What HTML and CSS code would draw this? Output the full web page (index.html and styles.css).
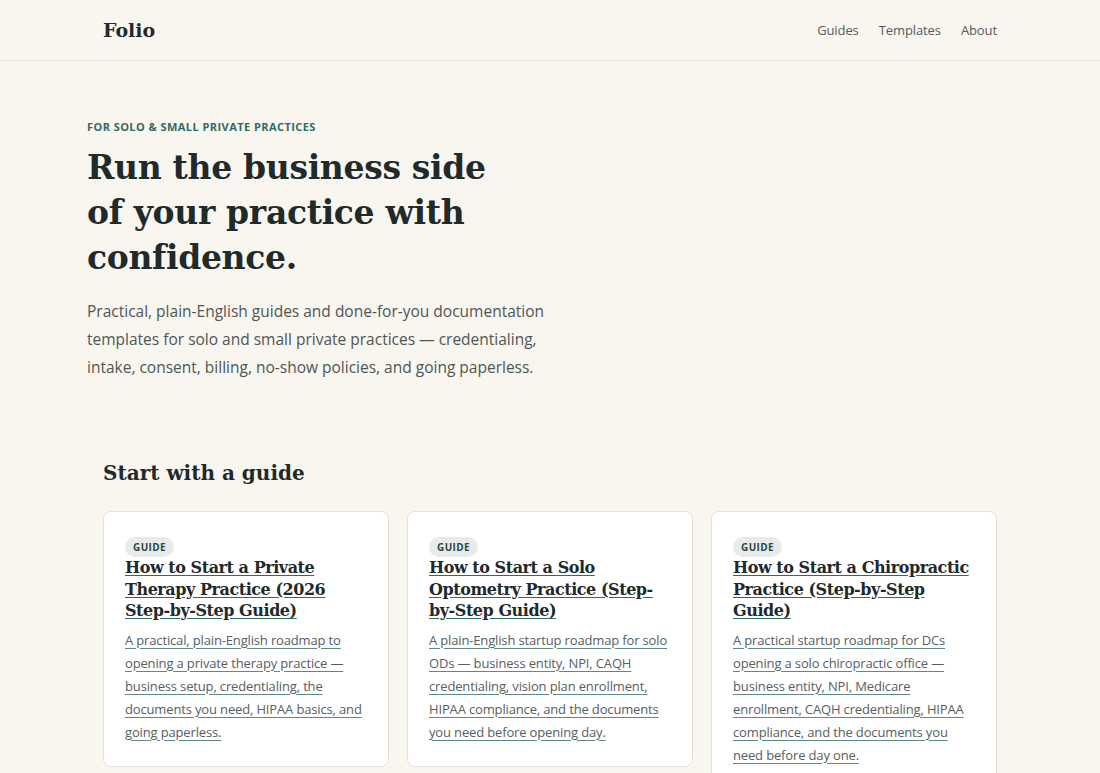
FILE: index.html
```html
<!DOCTYPE html>
<html lang="en">
<head>
    <meta charset="UTF-8">
    <meta name="viewport" content="width=device-width, initial-scale=1.0">
    <title>Folio</title>
    <link rel="stylesheet" href="styles.css">
</head>
<body>
    <header class="site-header">
        <div class="header-inner">
            <a class="logo" href="#">Folio</a>
            <nav class="nav">
                <a href="#">Guides</a>
                <a href="#">Templates</a>
                <a href="#">About</a>
            </nav>
        </div>
    </header>

    <section class="hero">
        <p class="eyebrow">For solo &amp; small private practices</p>
        <h1>Run the business side of your practice with confidence.</h1>
        <p class="lede">Practical, plain-English guides and done-for-you documentation templates for solo and small private practices — credentialing, intake, consent, billing, no-show policies, and going paperless.</p>
    </section>

    <section class="guides">
        <h2>Start with a guide</h2>
        <div class="card-grid">
            <a class="card" href="#">
                <span class="badge">Guide</span>
                <h3>How to Start a Private Therapy Practice (2026 Step-by-Step Guide)</h3>
                <p>A practical, plain-English roadmap to opening a private therapy practice — business setup, credentialing, the documents you need, HIPAA basics, and going paperless.</p>
            </a>
            <a class="card" href="#">
                <span class="badge">Guide</span>
                <h3>How to Start a Solo Optometry Practice (Step-by-Step Guide)</h3>
                <p>A plain-English startup roadmap for solo ODs — business entity, NPI, CAQH credentialing, vision plan enrollment, HIPAA compliance, and the documents you need before opening day.</p>
            </a>
            <a class="card" href="#">
                <span class="badge">Guide</span>
                <h3>How to Start a Chiropractic Practice (Step-by-Step Guide)</h3>
                <p>A practical startup roadmap for DCs opening a solo chiropractic office — business entity, NPI, Medicare enrollment, CAQH credentialing, HIPAA compliance, and the documents you need before day one.</p>
            </a>
        </div>
    </section>
</body>
</html>
```

FILE: styles.css
```css
* {
    box-sizing: border-box;
    margin: 0;
    padding: 0;
}
body {
    font-family: "Open Sans", "Noto Sans", Arial, sans-serif;
    background-color: #f9f5ef;
    color: #1f2a2b;
}
a {
    color: inherit;
    text-decoration: none;
}
.site-header {
    border-bottom: 1px solid #e4ded4;
}
.header-inner {
    max-width: 894px;
    margin: 0 auto;
    height: 60px;
    display: flex;
    justify-content: space-between;
    align-items: center;
}
.logo {
    font-family: "DejaVu Serif", Georgia, serif;
    font-weight: bold;
    font-size: 19px;
    color: #1f2a2b;
}
.nav {
    display: flex;
    gap: 20px;
}
.nav a {
    font-size: 13px;
    letter-spacing: -0.1px;
    color: #555c5b;
}
.hero {
    max-width: 926px;
    margin: 0 auto;
    padding: 58px 0 80px;
}
.eyebrow {
    font-size: 11px;
    font-weight: bold;
    text-transform: uppercase;
    letter-spacing: 0.04em;
    color: #2f6b63;
    margin-bottom: 11px;
}
h1 {
    font-family: "DejaVu Serif", Georgia, serif;
    font-weight: bold;
    font-size: 33px;
    line-height: 45px;
    letter-spacing: -0.01em;
    max-width: 420px;
    color: #1f2a2b;
    margin-bottom: 17px;
}
.lede {
    font-size: 15.5px;
    line-height: 28px;
    color: #4d5756;
    max-width: 480px;
}
.guides {
    max-width: 894px;
    margin: 0 auto;
}
h2 {
    font-family: "DejaVu Serif", Georgia, serif;
    font-weight: bold;
    font-size: 20px;
    color: #1f2a2b;
    margin-bottom: 26px;
}
.card-grid {
    display: grid;
    grid-template-columns: repeat(3, 1fr);
    gap: 18px;
    align-items: start;
}
.card {
    background-color: #fff;
    border: 1px solid #e6e0d6;
    border-radius: 8px;
    padding: 25px 21px 22px;
    display: flex;
    flex-direction: column;
    align-items: flex-start;
}
.badge {
    background-color: #e7ecea;
    color: #2a4744;
    font-size: 10px;
    font-weight: bold;
    text-transform: uppercase;
    letter-spacing: 0.04em;
    padding: 3px 8px;
    border-radius: 999px;
    line-height: 14px;
}
.card h3 {
    font-family: "DejaVu Serif", Georgia, serif;
    font-weight: bold;
    font-size: 16px;
    line-height: 21.5px;
    letter-spacing: -0.45px;
    color: #1f2a2b;
    text-decoration: underline;
    text-decoration-color: #2f6b63;
    text-underline-offset: 2px;
    margin-bottom: 7px;
}
.card p {
    font-size: 13px;
    line-height: 23px;
    letter-spacing: -0.15px;
    color: #56605f;
    text-decoration: underline;
    text-decoration-color: #5c8b85;
    text-underline-offset: 3px;
}
```
